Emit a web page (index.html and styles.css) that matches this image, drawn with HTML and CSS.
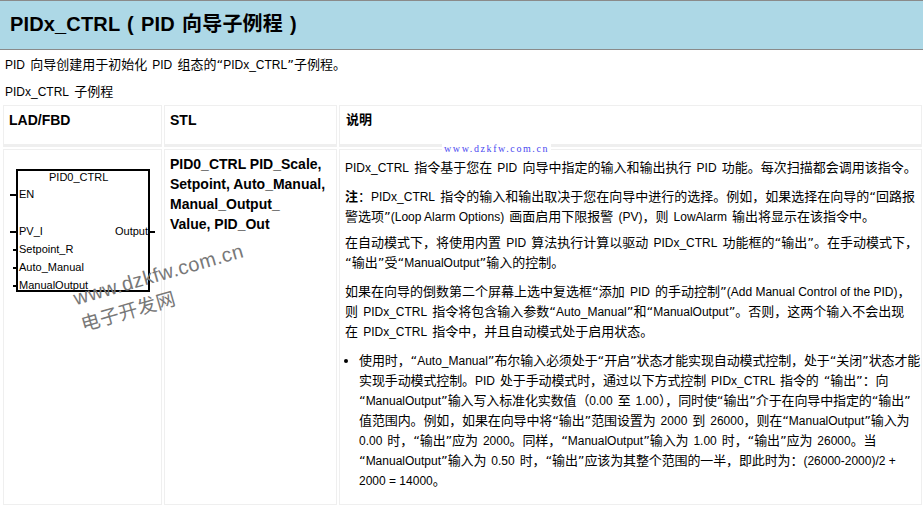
FILE: index.html
```html
<!DOCTYPE html>
<html lang="zh-CN">
<head>
<meta charset="utf-8">
<title>PIDx_CTRL</title>
<link rel="stylesheet" href="styles.css">
</head>
<body>
<h1 class="title">PIDx_CTRL ( PID 向导子例程 )</h1>
<p class="intro"><span class="l">PID</span> 向导创建用于初始化 <span class="l">PID</span> 组态的“<span class="l">PIDx_CTRL</span>”子例程。</p>
<p class="caption"><span class="l">PIDx_CTRL</span> 子例程</p>
<div class="table">
  <div class="cell head">LAD/FBD</div>
  <div class="cell head">STL</div>
  <div class="cell head head-zh">说明</div>
  <div class="cell diagram">
    <svg class="fbd" width="158" height="160" viewBox="0 0 158 160">
      <rect x="13" y="20" width="132" height="121" fill="#fff" stroke="#000" stroke-width="2"/>
      <path d="M6 45h6M6 82h6M9 100h3M9 118h3M9 136h3M146 82h5" stroke="#000" stroke-width="2" fill="none"/>
      <text x="45" y="31">PID0_CTRL</text>
      <text x="15" y="48">EN</text>
      <text x="15" y="85">PV_I</text>
      <text x="15" y="103">Setpoint_R</text>
      <text x="15" y="121">Auto_Manual</text>
      <text x="15" y="139">ManualOutput</text>
      <text x="111" y="85">Output</text>
    </svg>
  </div>
  <div class="cell stl">PID0_CTRL PID_Scale, Setpoint, Auto_Manual, Manual_Output_<br>Value, PID_Out</div>
  <div class="cell desc">
    <p><span class="l">PIDx_CTRL</span> 指令基于您在 <span class="l">PID</span> 向导中指定的输入和输出执行 <span class="l">PID</span> 功能。每次扫描都会调用该指令。</p>
    <p class="note"><b>注</b>：<span class="l">PIDx_CTRL</span> 指令的输入和输出取决于您在向导中进行的选择。例如，如果选择在向导的“回路报<br>警选项”<span class="l">(Loop Alarm Options)</span> 画面启用下限报警 <span class="l">(PV)</span>，则 <span class="l">LowAlarm</span> 输出将显示在该指令中。</p>
    <p>在自动模式下，将使用内置 <span class="l">PID</span> 算法执行计算以驱动 <span class="l">PIDx_CTRL</span> 功能框的“输出”。在手动模式下，<br>“输出”受“<span class="l">ManualOutput</span>”输入的控制。</p>
    <p>如果在向导的倒数第二个屏幕上选中复选框“添加 <span class="l">PID</span> 的手动控制”<span class="l">(Add Manual Control of the PID)</span>，<br>则 <span class="l">PIDx_CTRL</span> 指令将包含输入参数“<span class="l">Auto_Manual</span>”和“<span class="l">ManualOutput</span>”。否则，这两个输入不会出现<br>在 <span class="l">PIDx_CTRL</span> 指令中，并且自动模式处于启用状态。</p>
    <ul>
      <li>使用时，“<span class="l">Auto_Manual</span>”布尔输入必须处于“开启”状态才能实现自动模式控制，处于“关闭”状态才能<br>实现手动模式控制。<span class="l">PID</span> 处于手动模式时，通过以下方式控制 <span class="l">PIDx_CTRL</span> 指令的 “输出”：向<br>“<span class="l">ManualOutput</span>”输入写入标准化实数值（<span class="l">0.00</span> 至 <span class="l">1.00</span>），同时使“输出”介于在向导中指定的“输出”<br>值范围内。例如，如果在向导中将“输出”范围设置为 <span class="l">2000</span> 到 <span class="l">26000</span>，则在“<span class="l">ManualOutput</span>”输入为<br><span class="l">0.00</span> 时，“输出”应为 <span class="l">2000</span>。同样，“<span class="l">ManualOutput</span>”输入为 <span class="l">1.00</span> 时，“输出”应为 <span class="l">26000</span>。当<br>“<span class="l">ManualOutput</span>”输入为 <span class="l">0.50</span> 时，“输出”应该为其整个范围的一半，即此时为：<span class="l">(26000-2000)/2 +</span><br><span class="l">2000 = 14000</span>。</li>
    </ul>
  </div>
</div>
<div class="mark-url">www.dzkfw.com.cn</div>
<div class="mark-big"><span>www.dzkfw.com.cn</span><span class="mark-cn">电子开发网</span></div>
</body>
</html>
```
FILE: styles.css
```css
html, body { margin: 0; padding: 0; height: 510px; overflow: hidden; background: #fff; }
body { position: relative; font: 13px/20px "DejaVu Sans", "Noto Sans CJK SC", sans-serif; color: #000; word-spacing: 1px; }
.l { font: 12px/20px "Liberation Sans", sans-serif; word-spacing: 0; letter-spacing: 0; }
.title, .head, .stl, .mark-big { font-family: "Liberation Sans", "Noto Sans CJK SC", sans-serif; }
.title { margin: 0; height: 48px; padding-left: 10px; background: #add8e6; border-top: 1px solid #8a8a8a; border-bottom: 1px solid #8a8a8a; font-size: 20px; line-height: 46px; font-weight: bold; word-spacing: 1.5px; letter-spacing: 0.15px; }
.intro { margin: 0; padding: 5px 0 0 5px; height: 20px; }
.caption { margin: 7px 0 0; padding-left: 5px; height: 23px; line-height: 20px; }
.table { display: grid; grid-template-columns: 159px 173px 583px; grid-template-rows: 42px 356px; gap: 2px; margin-left: 3px; width: 919px; }
.cell { border: 1px solid #efefef; padding: 4px 6px; box-sizing: border-box; }
.head { font-weight: bold; line-height: 20px; border-bottom-width: 3px; font-size: 14px; padding-left: 5px; word-spacing: 0; }
.head-zh { font-size: 13px; padding-left: 6px; }
.diagram { padding: 0; }
.fbd { display: block; }
.fbd text { font: 11px "Liberation Sans", sans-serif; fill: #000; word-spacing: 0; }
.stl { font-weight: bold; font-size: 14px; padding: 4px 5px 0; word-spacing: 0; }
.desc { padding: 8px 0 8px 5px; white-space: nowrap; }
.desc p { margin: 0 0 9px; }
.desc .note { margin-bottom: 6px; }
.desc ul { margin: 0; padding: 0 0 0 14px; letter-spacing: -0.12px; }
.mark-url { position: absolute; left: 442px; top: 143px; padding: 0 2px; background: #fff; color: #4a4af0; font: 10px/12px "Liberation Serif", serif; letter-spacing: 1.6px; word-spacing: 0; }
.mark-big { position: absolute; left: 70px; top: 285px; display: flex; flex-direction: column; transform-origin: 0 0; transform: rotate(-16deg); color: #787878; font-size: 20px; line-height: 28px; letter-spacing: 0.5px; word-spacing: 0; }
.mark-cn { font-size: 19px; margin-left: 0; }
```
